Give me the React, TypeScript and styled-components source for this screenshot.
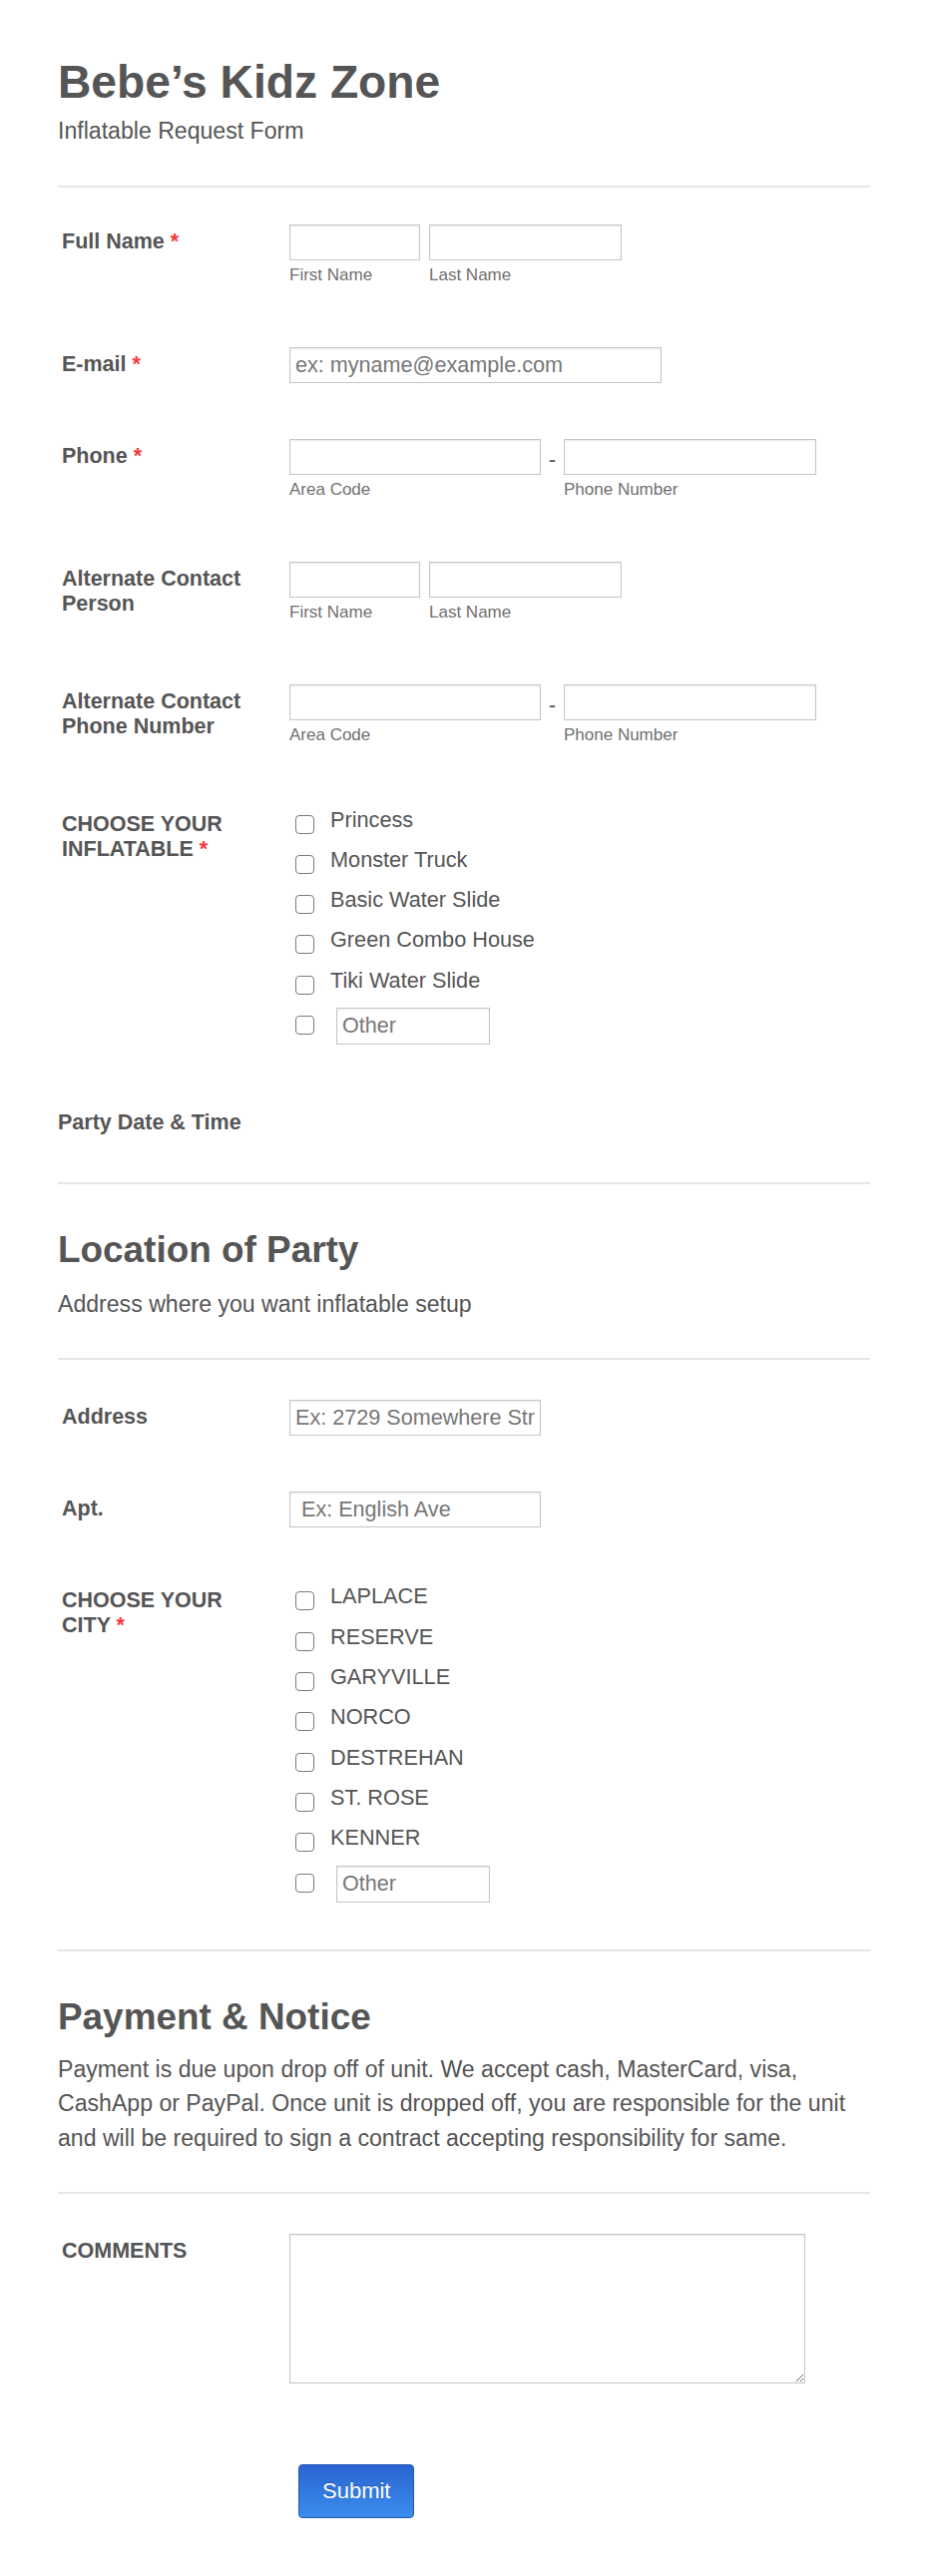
import React from "react";
import styled, { createGlobalStyle, css } from "styled-components";

const GlobalStyle = createGlobalStyle`
  html, body { margin: 0; padding: 0; background: #ffffff; }
  body { font-family: "Liberation Sans", Arial, sans-serif; color: #555555; }
  *, *::before, *::after { box-sizing: border-box; }
`;

const Page = styled.div`
  width: 930px;
  padding: 54px 58px 34px 58px;
`;

const Form = styled.form`
  width: 814px;
  display: flex;
  flex-direction: column;
`;

const Header = styled.header<{ $section?: boolean }>`
  border-bottom: 2px solid #e6e6e6;
  padding-bottom: 37px;
  margin-bottom: 9px;
  ${(p) =>
    p.$section &&
    css`
      border-top: 2px solid #e6e6e6;
      padding-top: 44px;
      margin-top: 19px;
      margin-bottom: 12px;
    `}
`;

const Title = styled.h1`
  margin: 0;
  font-size: 46.2px;
  line-height: 56px;
  font-weight: bold;
  color: #555555;
`;

const SectionTitle = styled.h2`
  margin: 0;
  font-size: 36.9px;
  line-height: 44px;
  font-weight: bold;
  color: #555555;
`;

const SubText = styled.p<{ $gap: number }>`
  margin: ${(p) => p.$gap}px 0 0;
  font-size: 23.1px;
  line-height: 34.5px;
  color: #555555;
`;

const Line = styled.div`
  display: flex;
  align-items: flex-start;
  padding: 28px 0;
`;

const Label = styled.label`
  flex: 0 0 232px;
  padding: 5px 16px 0 4px;
  font-size: 21.5px;
  line-height: 25px;
  font-weight: bold;
  color: #555555;
`;

const Required = styled.span`
  color: #f23a3c;
  font-weight: bold;
`;

const Controls = styled.div`
  flex: 1;
  display: flex;
  align-items: flex-start;
`;

const FieldGroup = styled.div`
  display: flex;
  flex-direction: column;
`;

const Pair = styled.div`
  display: flex;
  align-items: flex-start;
  gap: 9px;
`;

const TextInput = styled.input<{ $w: number; $h?: number }>`
  width: ${(p) => p.$w}px;
  height: ${(p) => p.$h ?? 36}px;
  margin: 0;
  padding: 0 5px;
  border: 1px solid #c6c6c6;
  box-shadow: inset 0 1px 2px rgba(0, 0, 0, 0.09);
  border-radius: 0;
  background: #ffffff;
  font-family: "Liberation Sans", Arial, sans-serif;
  font-size: 21.6px;
  color: #555555;
  outline: none;
  &::placeholder {
    color: #777777;
    white-space: pre;
  }
`;

const SubLabel = styled.span`
  display: block;
  font-size: 17px;
  line-height: 20px;
  padding: 5px 0 6px;
  color: #707070;
`;

const Dash = styled.span`
  width: 23px;
  text-align: center;
  font-size: 22px;
  line-height: 36px;
  padding-top: 3px;
  color: #555555;
`;

const Options = styled.div`
  display: flex;
  flex-direction: column;
  gap: 14.3px;
`;

const Option = styled.label`
  display: flex;
  align-items: flex-start;
  font-size: 21.7px;
  line-height: 26px;
  color: #555555;
`;

const Box = styled.input.attrs({ type: "checkbox" })`
  appearance: none;
  -webkit-appearance: none;
  flex: 0 0 19px;
  width: 19px;
  height: 19px;
  margin: 8px 16px -1px 6px;
  border: 1.5px solid #7a7a7a;
  border-radius: 4px;
  background: #ffffff;
`;

const OtherInput = styled(TextInput)`
  margin-left: 6px;
`;

const DateLine = styled.div`
  padding: 37px 0 28px;
  font-size: 21.5px;
  line-height: 26px;
  font-weight: bold;
  color: #555555;
`;

const TextArea = styled.textarea`
  width: 517px;
  height: 150px;
  margin: 0;
  padding: 5px;
  border: 1px solid #c6c6c6;
  box-shadow: inset 0 1px 2px rgba(0, 0, 0, 0.09);
  font-family: "Liberation Sans", Arial, sans-serif;
  font-size: 21.6px;
  color: #555555;
  resize: both;
  outline: none;
`;

const SubmitLine = styled.div`
  display: flex;
  padding: 53px 0 28px 241px;
`;

const SubmitButton = styled.button`
  height: 54px;
  padding: 0 23px;
  border: 1px solid #2456b4;
  border-radius: 4px;
  background: linear-gradient(to bottom, #2964d0 0%, #3b8ded 100%);
  color: #ffffff;
  font-family: "Liberation Sans", Arial, sans-serif;
  font-size: 22px;
  text-shadow: 0 -1px 0 rgba(0, 0, 0, 0.25);
  cursor: pointer;
`;

const Star = () => (
  <>
    {" "}
    <Required>*</Required>
  </>
);

const NameField = () => (
  <Pair>
    <FieldGroup>
      <TextInput $w={131} />
      <SubLabel>First Name</SubLabel>
    </FieldGroup>
    <FieldGroup>
      <TextInput $w={193} />
      <SubLabel>Last Name</SubLabel>
    </FieldGroup>
  </Pair>
);

const PhoneField = () => (
  <Controls>
    <FieldGroup>
      <TextInput $w={252} />
      <SubLabel>Area Code</SubLabel>
    </FieldGroup>
    <Dash>-</Dash>
    <FieldGroup>
      <TextInput $w={253} />
      <SubLabel>Phone Number</SubLabel>
    </FieldGroup>
  </Controls>
);

const CheckList = ({ items }: { items: string[] }) => (
  <Options>
    {items.map((item) => (
      <Option key={item}>
        <Box />
        {item}
      </Option>
    ))}
    <Option>
      <Box />
      <OtherInput $w={154} $h={37} placeholder="Other" />
    </Option>
  </Options>
);

const inflatables = ["Princess", "Monster Truck", "Basic Water Slide", "Green Combo House", "Tiki Water Slide"];
const cities = ["LAPLACE", "RESERVE", "GARYVILLE", "NORCO", "DESTREHAN", "ST. ROSE", "KENNER"];

export default function App() {
  return (
    <>
      <GlobalStyle />
      <Page>
        <Form onSubmit={(e) => e.preventDefault()}>
          <Header>
            <Title>Bebe’s Kidz Zone</Title>
            <SubText $gap={4}>Inflatable Request Form</SubText>
          </Header>

          <Line>
            <Label>
              Full Name<Star />
            </Label>
            <Controls>
              <NameField />
            </Controls>
          </Line>

          <Line>
            <Label>
              E-mail<Star />
            </Label>
            <Controls>
              <TextInput $w={373} placeholder="ex: myname@example.com" />
            </Controls>
          </Line>

          <Line>
            <Label>
              Phone<Star />
            </Label>
            <PhoneField />
          </Line>

          <Line>
            <Label>Alternate Contact Person</Label>
            <Controls>
              <NameField />
            </Controls>
          </Line>

          <Line>
            <Label>Alternate Contact Phone Number</Label>
            <PhoneField />
          </Line>

          <Line>
            <Label>
              CHOOSE YOUR INFLATABLE<Star />
            </Label>
            <Controls>
              <CheckList items={inflatables} />
            </Controls>
          </Line>

          <DateLine>Party Date &amp; Time</DateLine>

          <Header $section>
            <SectionTitle>Location of Party</SectionTitle>
            <SubText $gap={15}>Address where you want inflatable setup</SubText>
          </Header>

          <Line>
            <Label>Address</Label>
            <Controls>
              <TextInput $w={252} placeholder="Ex: 2729 Somewhere Street" />
            </Controls>
          </Line>

          <Line>
            <Label>Apt.</Label>
            <Controls>
              <TextInput $w={252} placeholder=" Ex: English Ave" />
            </Controls>
          </Line>

          <Line>
            <Label>
              CHOOSE YOUR CITY<Star />
            </Label>
            <Controls>
              <CheckList items={cities} />
            </Controls>
          </Line>

          <Header $section>
            <SectionTitle>Payment &amp; Notice</SectionTitle>
            <SubText $gap={13}>
              Payment is due upon drop off of unit. We accept cash, MasterCard, visa, CashApp or PayPal. Once unit is
              dropped off, you are responsible for the unit and will be required to sign a contract accepting
              responsibility for same.
            </SubText>
          </Header>

          <Line>
            <Label>COMMENTS</Label>
            <Controls>
              <TextArea />
            </Controls>
          </Line>

          <SubmitLine>
            <SubmitButton type="submit">Submit</SubmitButton>
          </SubmitLine>
        </Form>
      </Page>
    </>
  );
}
